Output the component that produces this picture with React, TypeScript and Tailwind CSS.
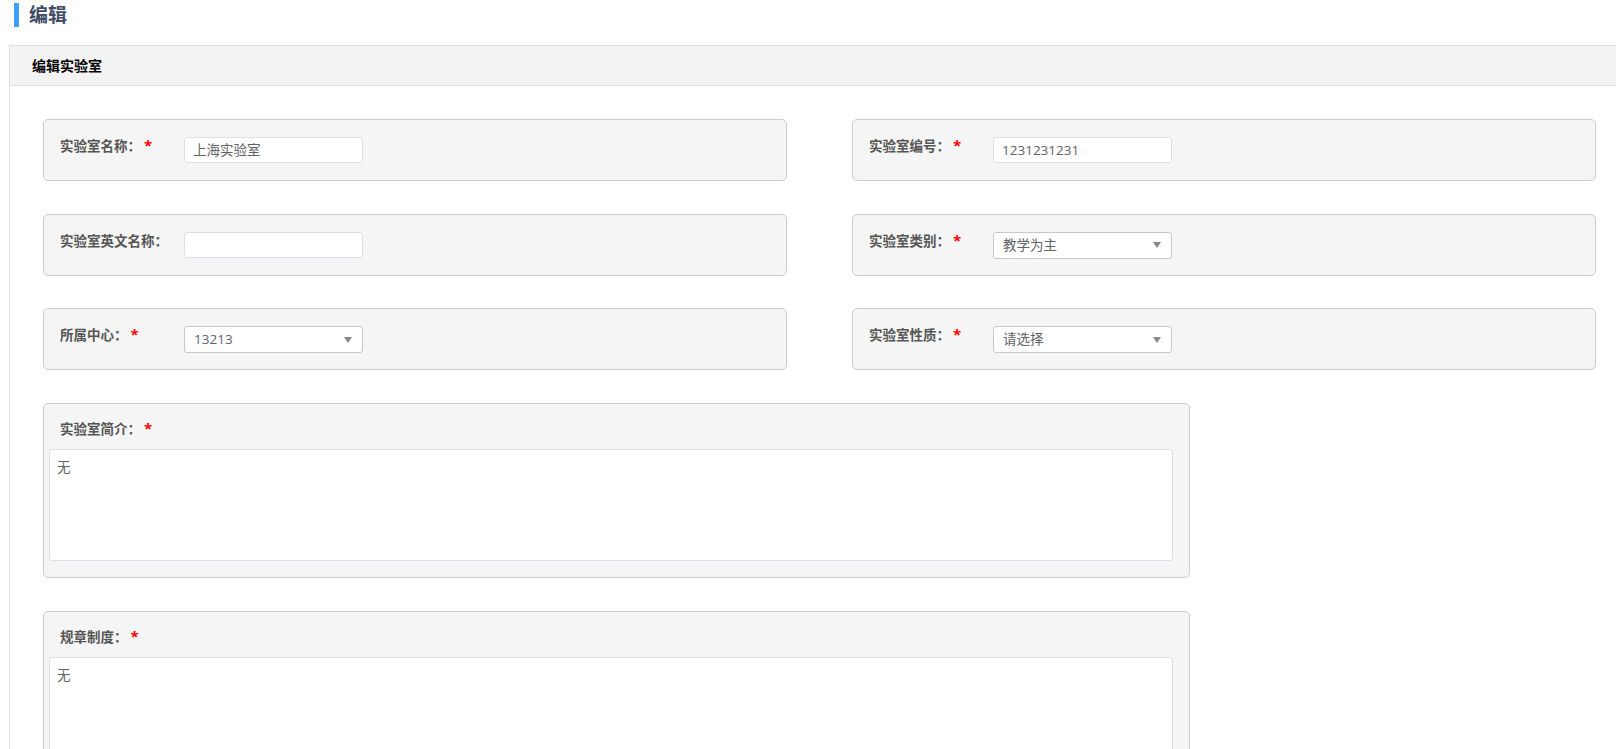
import React from 'react';

const FONT = "font-['Open_Sans','Noto_Sans_CJK_SC',sans-serif]";

const Req = () => (
  <span className="ml-[3px] mt-[-1px] text-[15px] font-bold leading-[16px] text-[#ff0000]">*</span>
);

const Label = ({ text, required }: { text: string; required?: boolean }) => (
  <div className="flex w-[124px] shrink-0 items-start pt-[1px] text-[13.5px] font-bold leading-[16px] text-[#555]">
    <span>{text}</span>
    {required && <Req />}
  </div>
);

const TextInput = ({ value }: { value: string }) => (
  <div className="flex h-[26px] w-[179px] items-center rounded-[3px] border border-[#dcdfe6] bg-white px-[8px] text-[13.5px] text-[#606266]">
    {value}
  </div>
);

const SelectBox = ({ value }: { value: string }) => (
  <div className="flex h-[27px] w-[179px] items-center justify-between rounded-[3px] border border-[#c8c8c8] bg-white pl-[9px] pr-[10px] text-[13.5px] text-[#606266]">
    <span>{value}</span>
    <svg width="8" height="6" viewBox="0 0 8 6">
      <path d="M0 0 L8 0 L4 6 Z" fill="#888" />
    </svg>
  </div>
);

const FieldCard = ({ label, required, children }: { label: string; required?: boolean; children: React.ReactNode }) => (
  <div className="flex h-[62px] rounded-[5px] border border-[#cccccc] bg-[#f5f5f5] pl-[16px] pt-[17px]">
    <Label text={label} required={required} />
    {children}
  </div>
);

const AreaCard = ({ label, value }: { label: string; value: string }) => (
  <div className="w-[1147px] rounded-[5px] border border-[#cccccc] bg-[#f5f5f5] pb-[16px] pl-[5px] pr-[16px] pt-[17px]">
    <div className="flex items-start pl-[11px] text-[13.5px] font-bold leading-[16px] text-[#555]">
      <span>{label}</span>
      <Req />
    </div>
    <div className="mt-[12px] h-[112px] rounded-[3px] border border-[#dcdfe6] bg-white px-[7px] py-[7px] text-[13.5px] leading-[20px] text-[#606266]">
      {value}
    </div>
  </div>
);

export default function App() {
  return (
    <div className={`h-[749px] overflow-hidden bg-white ${FONT}`}>
      <div className="flex h-[27px] items-end pl-[14px] pt-[3px]">
        <div className="h-[24px] w-[5px] bg-[#409eff]" />
        <span className="ml-[10px] self-center text-[19px] font-bold leading-[24px] text-[#404b66]">编辑</span>
      </div>

      <div className="ml-[9px] mt-[18px] border border-r-0 border-b-0 border-[#dcdcdc]">
        <div className="flex h-[40px] items-center border-b border-[#dcdcdc] bg-[#f3f3f3] pl-[22px] text-[14px] font-bold text-black">
          编辑实验室
        </div>

        <div className="pl-[33px] pt-[33px] pb-[40px]">
          <div className="grid w-[1553px] grid-cols-[744px_744px] gap-x-[65px] gap-y-[32.5px]">
            <FieldCard label="实验室名称：" required>
              <TextInput value="上海实验室" />
            </FieldCard>
            <FieldCard label="实验室编号：" required>
              <TextInput value="1231231231" />
            </FieldCard>
            <FieldCard label="实验室英文名称：">
              <TextInput value="" />
            </FieldCard>
            <FieldCard label="实验室类别：" required>
              <SelectBox value="教学为主" />
            </FieldCard>
            <FieldCard label="所属中心：" required>
              <SelectBox value="13213" />
            </FieldCard>
            <FieldCard label="实验室性质：" required>
              <SelectBox value="请选择" />
            </FieldCard>
          </div>

          <div className="mt-[33px] flex flex-col gap-[33px]">
            <AreaCard label="实验室简介：" value="无" />
            <AreaCard label="规章制度：" value="无" />
          </div>
        </div>
      </div>
    </div>
  );
}
